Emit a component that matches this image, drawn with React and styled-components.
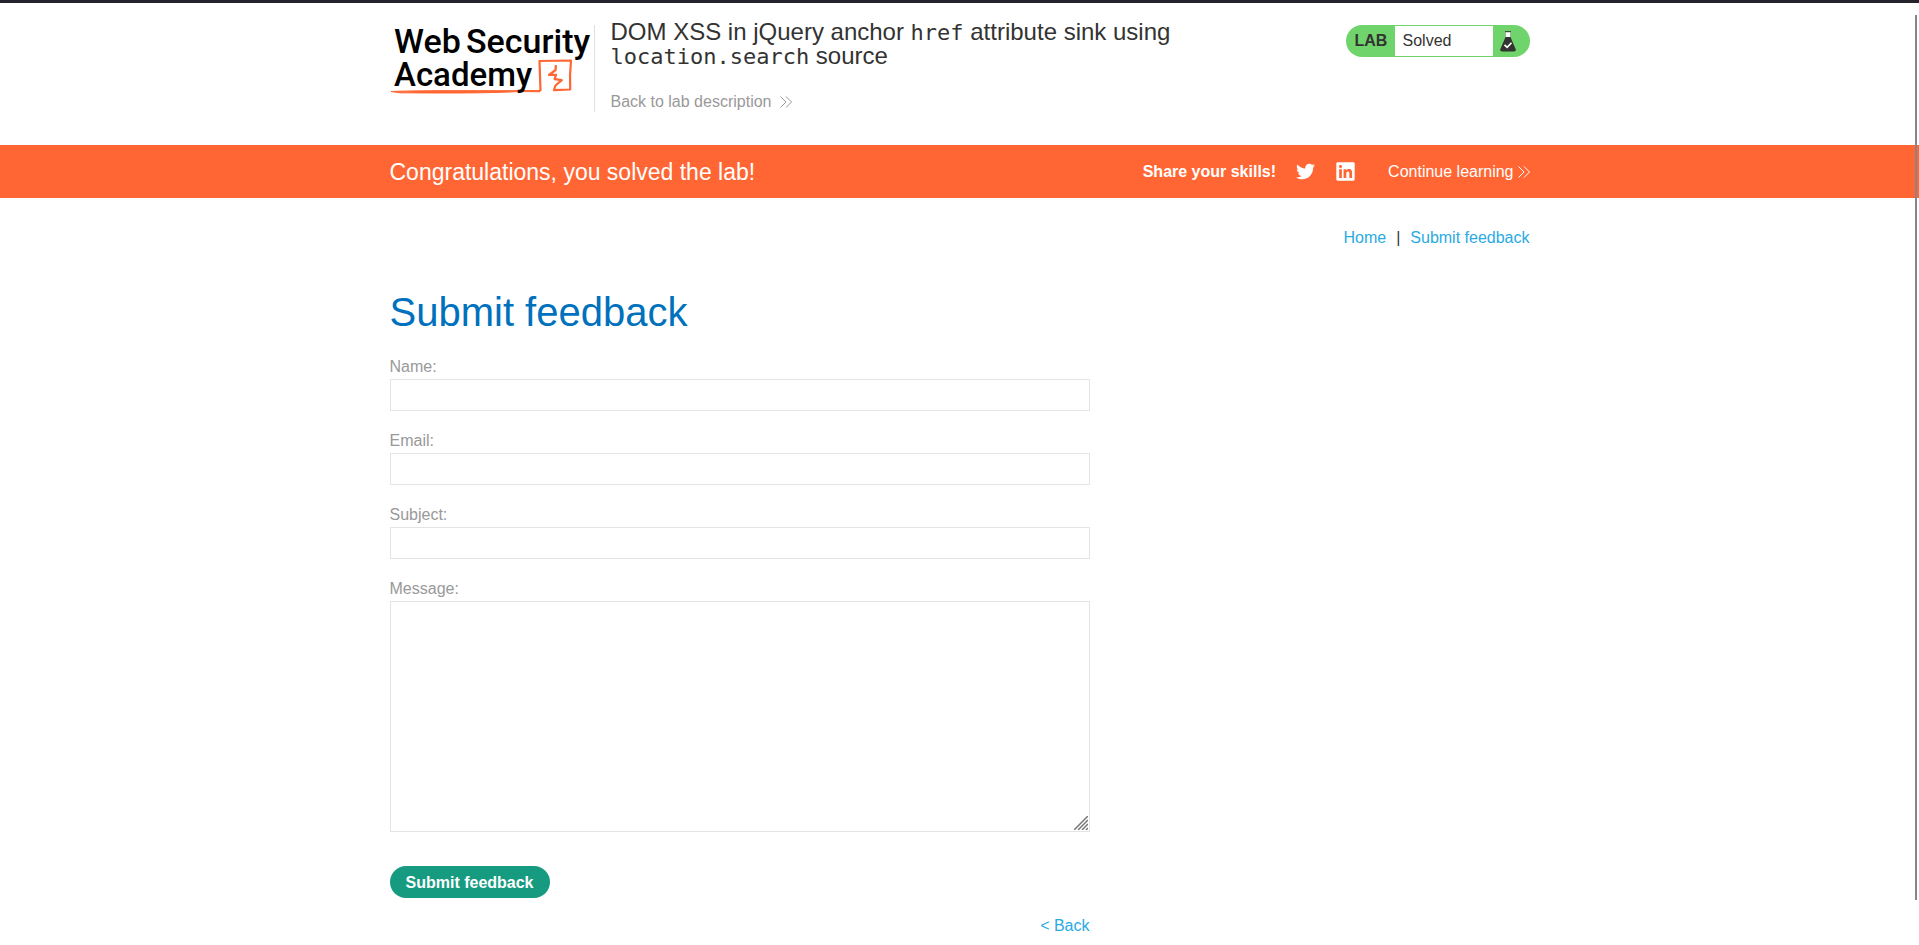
import React from 'react';
import styled, { createGlobalStyle, css } from 'styled-components';
import { FaTwitter, FaLinkedin } from 'react-icons/fa';

const GlobalStyle = createGlobalStyle`
  *, *::before, *::after { box-sizing: border-box; }
  body {
    margin: 0;
    background: #fff;
    color: #333332;
    font-family: Arial, "Liberation Sans", sans-serif;
    font-size: 16px;
    line-height: 24px;
  }
`;

const Page = styled.div`
  border-top: 3px solid #25232b;
`;

const Container = styled.div`
  max-width: 1140px;
  margin: 0 auto;
`;

const HeaderRow = styled(Container)`
  display: flex;
  align-items: flex-start;
  padding: 17px 0 31px;
`;

const LogoLink = styled.a`
  display: block;
  flex: none;
  height: 92px;
  margin-top: 2px;
`;

const TitleBlock = styled.div`
  flex: 1;
  position: relative;
  min-height: 94px;
  padding: 0 24px 0 17px;

  &::before {
    content: "";
    position: absolute;
    left: 0;
    top: 5px;
    bottom: 2px;
    width: 1px;
    background: #dfdfdf;
  }
`;

const Title = styled.h2`
  margin: 0 0 22px;
  max-width: 640px;
  font-size: 24px;
  font-weight: 400;
  line-height: 24px;

  code {
    font-family: "DejaVu Sans Mono", monospace;
    font-size: 22px;
    line-height: 20px;
  }
`;

const ArrowLink = styled.a`
  display: inline-flex;
  align-items: center;
  gap: ${(p) => p.$gap};
  color: ${(p) => p.$color};
  text-decoration: none;
`;

const Status = styled.div`
  display: flex;
  width: 184px;
  height: 32px;
  margin-top: 5px;
  border-radius: 16px;
  overflow: hidden;
  background: #70d46c;
  line-height: 32px;
`;

const StatusLabel = styled.span`
  width: 49px;
  padding-left: 9px;
  font-weight: 700;
`;

const StatusValue = styled.p`
  flex: 1;
  margin: 1px 0;
  padding-left: 8px;
  background: #fff;
  line-height: 30px;
`;

const StatusIcon = styled.span`
  display: flex;
  align-items: center;
  width: 37px;
  padding-left: 7px;
`;

const Banner = styled.section`
  background: #ff6633;
  color: #fff;
`;

const BannerRow = styled(Container)`
  display: flex;
  align-items: center;
  justify-content: space-between;
  height: 53px;
`;

const BannerTitle = styled.h4`
  margin: 0;
  font-size: 23px;
  font-weight: 400;
`;

const Share = styled.div`
  display: flex;
  align-items: center;
  font-weight: 700;
  gap: 20px;
`;

const SocialLink = styled.a`
  display: flex;
  color: #fff;
`;

const ContinueSlot = styled.div`
  display: flex;
  margin-left: 12px;
  font-weight: 400;
`;

const Nav = styled.nav`
  display: flex;
  justify-content: flex-end;
  gap: 10px;
  padding: 28px 0 38px;
`;

const linkStyle = css`
  color: #29abe2;
  text-decoration: none;
`;

const TextLink = styled.a`
  ${linkStyle}
`;

const Heading = styled.h1`
  margin: 0 0 19px;
  color: #0071bc;
  font-size: 40px;
  font-weight: 400;
  line-height: 48px;
`;

const Form = styled.form`
  max-width: 700px;
`;

const Field = styled.div`
  position: relative;
  display: flex;
  flex-direction: column;
  margin-bottom: ${(p) => (p.$last ? '34px' : '18px')};
`;

const Label = styled.label`
  color: #999;
`;

const controlStyle = css`
  width: 100%;
  margin: 0;
  border: 1px solid #e4e4e4;
  border-radius: 0;
  background: #fff;
  font: inherit;
  outline: none;
`;

const Input = styled.input`
  ${controlStyle}
  height: 32px;
  padding: 0 8px;
`;

const Textarea = styled.textarea`
  ${controlStyle}
  display: block;
  height: 231px;
  padding: 8px;
  resize: none;
`;

const Grip = styled.svg`
  position: absolute;
  right: 2px;
  bottom: 2px;
  pointer-events: none;
`;

const SubmitButton = styled.button`
  display: block;
  height: 32px;
  width: 160px;
  border: 0;
  border-radius: 16px;
  padding: 1px 0 0;
  background: #169b80;
  color: #fff;
  font: inherit;
  font-weight: 700;
`;

const BackRow = styled.div`
  padding-top: 16px;
  text-align: right;
`;

const ScrollThumb = styled.div`
  position: fixed;
  top: 15px;
  right: 2px;
  bottom: 45px;
  width: 2px;
  background: #868686;
`;

const Logo = () => (
  <svg width="204" height="92" viewBox="0 0 204 92" role="img" aria-label="Web Security Academy">
    <g fill="#000" fontFamily="Roboto, sans-serif" fontWeight="500" fontSize="34">
      <text x="4" y="31">Web</text>
      <text x="76" y="31">Security</text>
    </g>
    <path
      d="M1 69.5 C38 68 95 69 150 68.5 L150 67.5 L150 69.8 L130 69.5 C95 71.5 45 71 10 70.8 Z"
      fill="#ff6633"
      stroke="#ff6633"
      strokeWidth="1"
      strokeLinejoin="round"
    />
    <path
      d="M150.5 69 L149.500 39 L181 38.500 Q179.500 53 180.200 67.500 L164 68.200 L165.500 63.500 L171.800 58.200 L164.600 57.200 L166 52.800 L159 53 L165.600 48 L165.800 43"
      fill="none"
      stroke="#ff6633"
      strokeWidth="2.2"
      strokeLinejoin="round"
    />
    <text x="4" y="64" fill="#000" fontFamily="Roboto, sans-serif" fontWeight="500" fontSize="33">
      Academy
    </text>
  </svg>
);

const Chevrons = () => (
  <svg width="12" height="12" viewBox="0 0 12 12" fill="none" stroke="currentColor" aria-hidden="true">
    <path d="M0.500 0.500 L6 6 L0.500 11.500 M6 0.500 L11.500 6 L6 11.500" />
  </svg>
);

const Flask = () => (
  <svg width="16" height="21" viewBox="0 0 16 21" aria-hidden="true">
    <path d="M5.500 1 H10.500 V6 H5.500 Z" fill="#fff" />
    <path d="M5 0.700 H11" stroke="#333332" strokeWidth="1" />
    <path d="M5.500 1 V6 M10.500 1 V6" stroke="#8fae8c" strokeWidth="0.800" />
    <path d="M5.500 6 H10.500 L15.800 18.500 Q16 20.500 14 20.500 H2 Q0 20.500 0.200 18.500 Z" fill="#333332" />
    <path d="M4.500 13.800 L7.200 16.400 L11.500 11.800" fill="none" stroke="#fff" strokeWidth="1.600" />
  </svg>
);

const fields = [
  { id: 'name', label: 'Name:', type: 'text' },
  { id: 'email', label: 'Email:', type: 'email' },
  { id: 'subject', label: 'Subject:', type: 'text' },
];

export default function App() {
  return (
    <Page>
      <GlobalStyle />
      <header>
        <HeaderRow>
          <LogoLink href="#academy">
            <Logo />
          </LogoLink>
          <TitleBlock>
            <Title>
              DOM XSS in jQuery anchor <code>href</code> attribute sink using <code>location.search</code> source
            </Title>
            <ArrowLink href="#lab" $color="#999" $gap="9px">
              Back to lab description
              <Chevrons />
            </ArrowLink>
          </TitleBlock>
          <Status>
            <StatusLabel>LAB</StatusLabel>
            <StatusValue>Solved</StatusValue>
            <StatusIcon>
              <Flask />
            </StatusIcon>
          </Status>
        </HeaderRow>
      </header>

      <Banner>
        <BannerRow>
          <BannerTitle>Congratulations, you solved the lab!</BannerTitle>
          <Share>
            <span>Share your skills!</span>
            <SocialLink href="#twitter" aria-label="Twitter">
              <FaTwitter size={19} />
            </SocialLink>
            <SocialLink href="#linkedin" aria-label="LinkedIn">
              <FaLinkedin size={21} />
            </SocialLink>
            <ContinueSlot>
              <ArrowLink href="#continue" $color="#fff" $gap="4px">
                Continue learning
                <Chevrons />
              </ArrowLink>
            </ContinueSlot>
          </Share>
        </BannerRow>
      </Banner>

      <Container as="main">
        <Nav>
          <TextLink href="#home">Home</TextLink>
          <span>|</span>
          <TextLink href="#feedback">Submit feedback</TextLink>
        </Nav>
        <Heading>Submit feedback</Heading>
        <Form onSubmit={(e) => e.preventDefault()}>
          {fields.map((f) => (
            <Field key={f.id}>
              <Label htmlFor={f.id}>{f.label}</Label>
              <Input id={f.id} name={f.id} type={f.type} />
            </Field>
          ))}
          <Field $last>
            <Label htmlFor="message">Message:</Label>
            <Textarea id="message" name="message" />
            <Grip width="14" height="14" viewBox="0 0 14 14" stroke="#777" strokeWidth="1.500" aria-hidden="true">
              <path d="M0 14 L14 0 M4 14 L14 4 M8 14 L14 8 M12 14 L14 12" />
            </Grip>
          </Field>
          <SubmitButton type="submit">Submit feedback</SubmitButton>
          <BackRow>
            <TextLink href="#back">&lt; Back</TextLink>
          </BackRow>
        </Form>
      </Container>
      <ScrollThumb />
    </Page>
  );
}
